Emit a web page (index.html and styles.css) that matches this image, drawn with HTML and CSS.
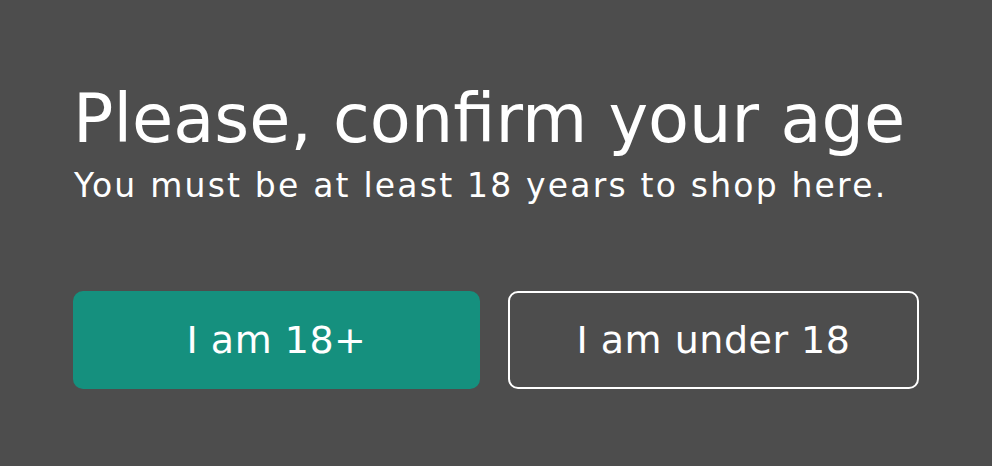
FILE: index.html
```html
<!DOCTYPE html>
<html lang="en">
<head>
	<meta charset="UTF-8">
	<title>Age check</title>
	<link rel="stylesheet" href="styles.css">
</head>
<body>
	<div id="gate">
		<h1 class="title">Please, confirm your age</h1>
		<p class="sub">You must be at least 18 years to shop here.</p>

		<div class="actions">
			<a class="btn btn-yes">I am 18+</a>
			<a class="btn btn-no">I am under 18</a>
		</div>
	</div>
</body>
</html>
```

FILE: styles.css
```css
html, body {
	margin: 0;
	padding: 0;
	background: #4d4d4d;
}

body {
	font-family: "DejaVu Sans", "Open Sans", sans-serif;
	color: #fff;
}

a {
	text-decoration: none;
	color: #fff;
}

#gate {
	width: 846px;
	margin: 0 auto;
	padding-top: 79px;
}

.title {
	margin: 0 0 7px 0;
	font-size: 67px;
	line-height: 80px;
	font-weight: 400;
}

.sub {
	margin: 0 0 85px 1px;
	font-size: 33px;
	line-height: 40px;
	font-weight: 400;
	letter-spacing: 2.2px;
}

.actions {
	display: flex;
	gap: 28px;
}

.btn {
	flex: 1;
	height: 98px;
	box-sizing: border-box;
	border-radius: 10px;
	display: flex;
	align-items: center;
	justify-content: center;
	font-size: 38px;
	line-height: 1;
	letter-spacing: 0.5px;
	cursor: pointer;
}

.btn-yes { background: #15907e; }

.btn-no { border: 2px solid #fff; }
```
